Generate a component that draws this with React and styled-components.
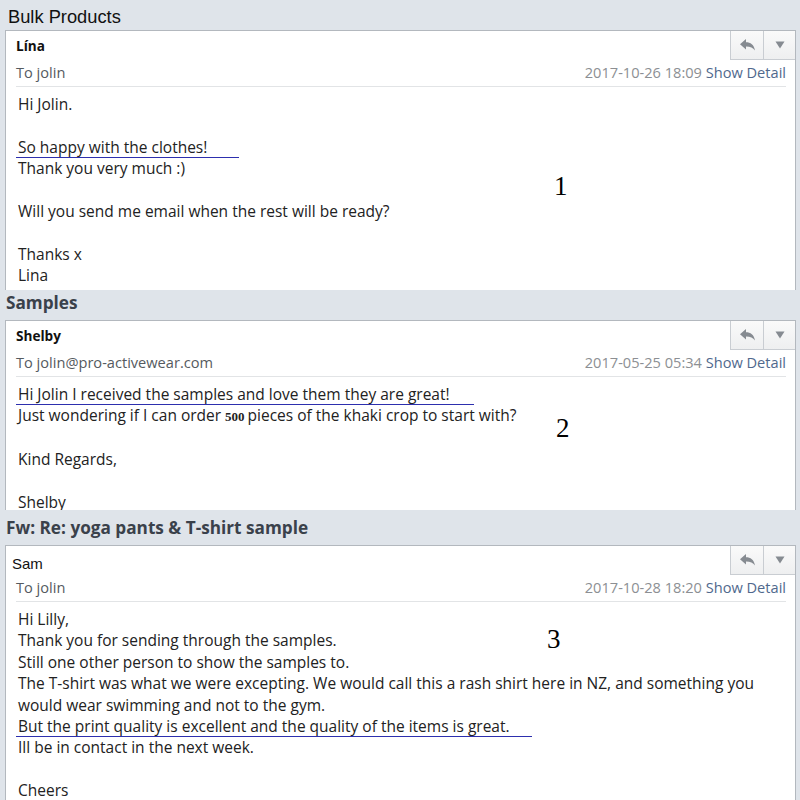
import React from "react";
import styled, { createGlobalStyle } from "styled-components";

const GlobalStyle = createGlobalStyle`
  html, body {
    margin: 0;
    padding: 0;
    background: #dfe4ea;
  }
  body {
    width: 800px;
    height: 800px;
    overflow: hidden;
    font-family: "Open Sans", "Noto Sans", sans-serif;
  }
`;

const emails = [
  {
    title: "Bulk Products",
    plainTitle: true,
    titleHeight: 30,
    titleShift: 3,
    cardHeight: 260,
    from: "Lína",
    boldName: true,
    to: "To jolin",
    date: "2017-10-26 18:09",
    mark: { n: "1", left: 548, top: 140 },
    lines: [
      "Hi Jolin.",
      "",
      { text: "So happy with the clothes!", line: 221 },
      "Thank you very much :)",
      "",
      "Will you send me email when the rest will be ready?",
      "",
      "Thanks x",
      "Lina",
    ],
  },
  {
    title: "Samples",
    titleHeight: 30,
    titleShift: -5,
    cardHeight: 190,
    from: "Shelby",
    boldName: true,
    to: "To jolin@pro-activewear.com",
    date: "2017-05-25 05:34",
    mark: { n: "2", left: 550, top: 92 },
    lines: [
      { text: "Hi Jolin I received the samples and love them they are great!", line: 456 },
      "ORDER",
      "",
      "Kind Regards,",
      "",
      "Shelby",
    ],
  },
  {
    title: "Fw: Re: yoga pants & T-shirt sample",
    titleHeight: 35,
    titleShift: -1,
    cardHeight: 255,
    from: "Sam",
    boldName: false,
    to: "To jolin",
    date: "2017-10-28 18:20",
    mark: { n: "3", left: 541, top: 78 },
    lines: [
      "Hi Lilly,",
      "Thank you for sending through the samples.",
      "Still one other person to show the samples to.",
      "The T-shirt was what we were excepting. We would call this a rash shirt here in NZ, and something you",
      "would wear swimming and not to the gym.",
      { text: "But the print quality is excellent and the quality of the items is great.", line: 514 },
      "Ill be in contact in the next week.",
      "",
      "Cheers",
    ],
  },
];

function ReplyIcon() {
  return (
    <svg width="17" height="14" viewBox="0 0 17 14">
      <path
        d="M1 6.2 L7 1 V4.2 C11.5 4.2 15 6.5 16 12.5 C14 9.8 11.5 8.4 7 8.4 V11.5 Z"
        fill="#868b91"
      />
    </svg>
  );
}

function CaretIcon() {
  return (
    <svg width="10" height="8" viewBox="0 0 10 8">
      <path d="M0.5 0.5 H9.5 L5 7.5 Z" fill="#868b91" />
    </svg>
  );
}

export default function App() {
  return (
    <>
      <GlobalStyle />
      <Page>
        {emails.map((e) => (
          <Section key={e.title}>
            <TitleBar
              $height={e.titleHeight}
              $shift={e.titleShift}
              $plain={e.plainTitle}
            >
              {e.title}
            </TitleBar>
            <Card $height={e.cardHeight}>
              <NameRow>
                <Name $bold={e.boldName}>{e.from}</Name>
                <Toolbar>
                  <ToolButton $wide>
                    <ReplyIcon />
                  </ToolButton>
                  <ToolButton>
                    <CaretIcon />
                  </ToolButton>
                </Toolbar>
              </NameRow>
              <MetaRow>
                <Recipient>{e.to}</Recipient>
                <DateText>
                  {e.date} <DetailLink>Show Detail</DetailLink>
                </DateText>
              </MetaRow>
              <Divider />
              <Body>
                {e.lines.map((l, i) => {
                  if (l === "") return <Line key={i}>&nbsp;</Line>;
                  if (l === "ORDER")
                    return (
                      <Line key={i}>
                        Just wondering if I can order<Qty>500</Qty>pieces of the khaki
                        crop to start with?
                      </Line>
                    );
                  if (typeof l === "object")
                    return (
                      <Line key={i}>
                        <Marked $width={l.line}>{l.text}</Marked>
                      </Line>
                    );
                  return <Line key={i}>{l}</Line>;
                })}
              </Body>
              <Number style={{ left: e.mark.left, top: e.mark.top }}>
                {e.mark.n}
              </Number>
            </Card>
          </Section>
        ))}
      </Page>
    </>
  );
}

const Page = styled.div`
  display: flex;
  flex-direction: column;
  width: 800px;
  height: 800px;
  overflow: hidden;
`;

const Section = styled.section`
  display: flex;
  flex-direction: column;
`;

const TitleBar = styled.div`
  height: ${(p) => p.$height}px;
  display: flex;
  align-items: center;
  padding-left: ${(p) => (p.$plain ? 8 : 6)}px;
  box-sizing: border-box;
  font-family: ${(p) =>
    p.$plain ? `"Liberation Sans", Arial, sans-serif` : `"Open Sans", sans-serif`};
  font-size: ${(p) => (p.$plain ? 18.3 : 17.2)}px;
  font-weight: ${(p) => (p.$plain ? 400 : 700)};
  color: ${(p) => (p.$plain ? "#111" : "#3a414b")};
  padding-top: ${(p) => Math.max(p.$shift, 0)}px;
  padding-bottom: ${(p) => Math.max(-p.$shift, 0)}px;
`;

const Card = styled.div`
  position: relative;
  height: ${(p) => p.$height}px;
  margin: 0 4px 0 5px;
  box-sizing: border-box;
  background: #fff;
  border: 1px solid #b3b8be;
  border-bottom: none;
  overflow: hidden;
`;

const NameRow = styled.div`
  display: flex;
  justify-content: space-between;
  align-items: flex-start;
  height: 28px;
`;

const Name = styled.div`
  padding: ${(p) => (p.$bold ? "6px 0 0 10px" : "9px 0 0 6px")};
  line-height: 18px;
  font-family: ${(p) =>
    p.$bold ? `"Open Sans", sans-serif` : `"Liberation Sans", Arial, sans-serif`};
  font-size: ${(p) => (p.$bold ? 13.6 : 15)}px;
  font-weight: ${(p) => (p.$bold ? 700 : 400)};
  color: #111;
`;

const Toolbar = styled.div`
  display: flex;
  height: 29px;
  border-left: 1px solid #c9cdd2;
  border-bottom: 1px solid #c9cdd2;
  box-sizing: border-box;
`;

const ToolButton = styled.div`
  width: ${(p) => (p.$wide ? 32 : 31)}px;
  display: flex;
  align-items: center;
  justify-content: center;
  background: linear-gradient(#fafafa, #eeeff0);
  & + & {
    border-left: 1px solid #c9cdd2;
  }
`;

const MetaRow = styled.div`
  display: flex;
  justify-content: space-between;
  align-items: center;
  height: 26px;
  padding: 0 9px 0 10px;
  font-size: 14.6px;
`;

const Recipient = styled.span`
  color: #555a60;
`;

const DateText = styled.span`
  color: #8c8f93;
`;

const DetailLink = styled.span`
  color: #50698d;
`;

const Divider = styled.div`
  height: 1px;
  margin: 1px 9px 0 10px;
  background: #e2e4e6;
`;

const Body = styled.div`
  padding: 7px 0 0 12px;
  font-size: 15.5px;
  line-height: 21.4px;
  color: #222;
  white-space: nowrap;
`;

const Line = styled.div``;

const Marked = styled.span`
  display: inline-block;
  width: ${(p) => p.$width}px;
  margin-left: -2px;
  padding-left: 2px;
  line-height: 19px;
  border-bottom: 1.5px solid #2d2fae;
`;

const Qty = styled.span`
  font-family: "Liberation Serif", "Times New Roman", serif;
  font-weight: 700;
  font-size: 13px;
  margin: 0 3px 0 4px;
`;

const Number = styled.div`
  position: absolute;
  font-family: "Liberation Serif", "Times New Roman", serif;
  font-size: 27px;
  line-height: 30px;
  color: #000;
`;
